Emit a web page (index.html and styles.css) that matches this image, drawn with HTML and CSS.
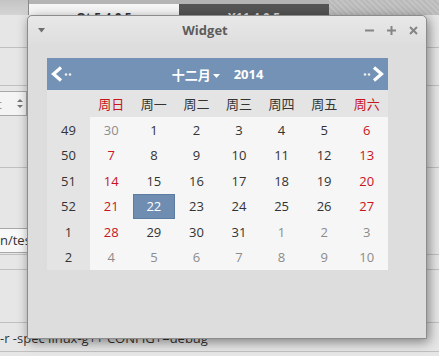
FILE: index.html
```html
<!DOCTYPE html>
<html lang="zh">
<head>
    <meta charset="UTF-8">
    <title>Widget</title>
    <link rel="stylesheet" href="styles.css">
</head>
<body>
    <!-- the application behind the dialog -->
    <div class="desktop">
        <div class="tabbar">
            <div class="tab-gap"></div>
            <div class="tab tab-light">Qt 5.4.0 5</div>
            <div class="tab tab-dark">X11 4.0.5</div>
            <div class="tab-rest"></div>
        </div>
        <div class="row row-a"></div>
        <div class="row row-b"></div>
        <div class="row row-c">
            <div class="spin">
                <span class="spin-text">t</span>
                <span class="spin-arrows"><i class="up"></i><i class="down"></i></span>
            </div>
        </div>
        <div class="row row-d">
            <div class="field">n/test</div>
        </div>
        <div class="row row-e"></div>
        <div class="row row-f"></div>
        <div class="row row-g">-r -spec linux-g++ CONFIG+=debug</div>
    </div>

    <!-- the dialog window -->
    <div class="window">
        <div class="titlebar">
            <span class="tb-menu"><svg width="7" height="5" viewBox="0 0 7 5"><path d="M0 0H7L3.5 4.5Z" fill="#6e6e6e"/></svg></span>
            <span class="tb-title">Widget</span>
            <span class="tb-btn"><svg width="9" height="9" viewBox="0 0 9 9"><path d="M0 4.5H9" stroke="#858585" stroke-width="2"/></svg></span>
            <span class="tb-btn"><svg width="9" height="9" viewBox="0 0 9 9"><path d="M0 4.5H9M4.5 0V9" stroke="#858585" stroke-width="2"/></svg></span>
            <span class="tb-btn"><svg width="9" height="9" viewBox="0 0 9 9"><path d="M1 1L8 8M8 1L1 8" stroke="#858585" stroke-width="2"/></svg></span>
        </div>

        <div class="content">
            <div class="calendar">
                <div class="cal-nav">
                    <span class="nav-btn">
                        <svg width="24" height="16" viewBox="0 0 24 16"><path d="M10 1.5 L2.5 8 L10 14.5" fill="none" stroke="#fff" stroke-width="3.2"/><circle cx="15" cy="8.5" r="1.3" fill="#eee"/><circle cx="19" cy="8.5" r="1.3" fill="#eee"/></svg>
                    </span>
                    <span class="nav-title">
                        <span class="nav-month">十二月<svg width="7" height="5" viewBox="0 0 7 5"><path d="M0 0H7L3.5 4Z" fill="#fff"/></svg></span>
                        <span class="nav-year">2014</span>
                    </span>
                    <span class="nav-btn">
                        <svg width="24" height="16" viewBox="0 0 24 16"><circle cx="5" cy="8.5" r="1.3" fill="#eee"/><circle cx="9" cy="8.5" r="1.3" fill="#eee"/><path d="M14 1.5 L21.5 8 L14 14.5" fill="none" stroke="#fff" stroke-width="3.2"/></svg>
                    </span>
                </div>

                <div class="cal-grid">
                    <div class="hd"></div>
                    <div class="hd red">周日</div>
                    <div class="hd">周一</div>
                    <div class="hd">周二</div>
                    <div class="hd">周三</div>
                    <div class="hd">周四</div>
                    <div class="hd">周五</div>
                    <div class="hd red">周六</div>

                    <div class="wk">49</div>
                    <div class="muted">30</div>
                    <div>1</div><div>2</div><div>3</div><div>4</div><div>5</div>
                    <div class="red">6</div>

                    <div class="wk">50</div>
                    <div class="red">7</div>
                    <div>8</div><div>9</div><div>10</div><div>11</div><div>12</div>
                    <div class="red">13</div>

                    <div class="wk">51</div>
                    <div class="red">14</div>
                    <div>15</div><div>16</div><div>17</div><div>18</div><div>19</div>
                    <div class="red">20</div>

                    <div class="wk">52</div>
                    <div class="red">21</div>
                    <div class="sel">22</div>
                    <div>23</div><div>24</div><div>25</div><div>26</div>
                    <div class="red">27</div>

                    <div class="wk">1</div>
                    <div class="red">28</div>
                    <div>29</div><div>30</div><div>31</div>
                    <div class="muted">1</div><div class="muted">2</div><div class="muted">3</div>

                    <div class="wk">2</div>
                    <div class="muted">4</div><div class="muted">5</div><div class="muted">6</div>
                    <div class="muted">7</div><div class="muted">8</div><div class="muted">9</div>
                    <div class="muted">10</div>
                </div>
            </div>
        </div>
    </div>
</body>
</html>
```

FILE: styles.css
```css
/* General styles */
body {
    margin: 0;
    width: 439px;
    height: 356px;
    overflow: hidden;
    position: relative;
    font-family: "Open Sans", "Noto Sans CJK SC", sans-serif;
    background-color: #e6e6e6;
    color: #333;
}

/* Background application */
.desktop {
    display: flex;
    flex-direction: column;
    height: 356px;
}

.tabbar {
    flex: none;
    height: 15px;
    display: flex;
    background-color: #b4b4b4;
}

.tab-gap {
    width: 28px;
    background: linear-gradient(#c4c4c4, #d4d4d4);
    border-right: 1px solid #8a8a8a;
}

.tab {
    width: 150px;
    height: 11px;
    margin-top: 4px;
    overflow: hidden;
    font-size: 12px;
    font-weight: bold;
    line-height: 27px;
    text-align: center;
}

.tab-light {
    background-color: #f6f6f6;
    color: #333;
}

.tab-dark {
    background-color: #555;
    color: #ddd;
}

.tab-rest {
    flex: 1;
    background: repeating-linear-gradient(45deg, #bababa 0 2px, #c4c4c4 2px 4px);
}

.row {
    flex: none;
    box-sizing: border-box;
    border-bottom: 1px solid #c0c0c0;
}

.row-a { height: 33px; }
.row-b { height: 38px; }
.row-c { height: 82px; }
.row-d { height: 87px; }
.row-e { height: 15px; }
.row-f { height: 53px; }

.row-g {
    height: 29px;
    padding-top: 5px;
    font-size: 13px;
    line-height: 20px;
    white-space: nowrap;
}

.spin {
    margin-top: 5px;
    width: 27px;
    height: 25px;
    box-sizing: border-box;
    border: 1px solid #a8a8a8;
    border-left: none;
    background-color: #f4f4f4;
    display: flex;
    align-items: center;
    justify-content: space-between;
    font-size: 13px;
}

.spin-text {
    margin-left: -3px;
    color: #888;
}

.spin-arrows {
    display: flex;
    flex-direction: column;
    gap: 3px;
    margin-right: 3px;
}

.spin-arrows i {
    width: 0;
    height: 0;
    border-left: 3px solid transparent;
    border-right: 3px solid transparent;
}

.spin-arrows .up { border-bottom: 3px solid #777; }
.spin-arrows .down { border-top: 3px solid #777; }

.field {
    margin-top: 60px;
    width: 40px;
    height: 25px;
    box-sizing: border-box;
    border: 1px solid #a8a8a8;
    border-left: none;
    background-color: #f8f8f8;
    font-size: 13px;
    line-height: 22px;
    white-space: nowrap;
    overflow: hidden;
}

/* Dialog window */
.window {
    position: absolute;
    left: 27px;
    top: 15px;
    width: 400px;
    height: 324px;
    box-sizing: border-box;
    border: 1px solid #8c8c8c;
    border-radius: 5px 5px 0 0;
    background-color: #dddddd;
    box-shadow: 2px 3px 12px rgba(0, 0, 0, 0.45);
    display: flex;
    flex-direction: column;
}

.titlebar {
    height: 28px;
    flex: none;
    display: flex;
    align-items: center;
    padding-left: 2px;
    padding-right: 2px;
    border-radius: 5px 5px 0 0;
    background: linear-gradient(#e8e8e8, #dedede);
}

.tb-menu,
.tb-btn {
    width: 22px;
    height: 28px;
    display: flex;
    align-items: center;
    justify-content: center;
}

.tb-title {
    flex: 1;
    text-align: center;
    font-size: 13px;
    font-weight: bold;
    color: #5c5c5c;
}

.content {
    padding: 14px 0 0 19px;
}

/* Calendar */
.calendar {
    width: 341px;
}

.cal-nav {
    height: 32px;
    display: flex;
    align-items: center;
    padding: 0 4px 0 4px;
    background-color: #7392b5;
    color: #fff;
}

.nav-btn {
    width: 24px;
    height: 16px;
    display: flex;
}

.nav-title {
    flex: 1;
    display: flex;
    align-items: center;
    justify-content: center;
    gap: 14px;
    font-size: 13px;
    font-weight: bold;
}

.nav-month {
    display: flex;
    align-items: center;
    gap: 2px;
}

.nav-month svg {
    margin-top: 4px;
}

.cal-grid {
    display: grid;
    grid-template-columns: 43px repeat(7, 1fr);
    grid-template-rows: 27px repeat(6, 25.5px);
    background-color: #f6f6f6;
    font-size: 13px;
    color: #333;
}

.cal-grid > div {
    display: flex;
    align-items: center;
    justify-content: center;
}

.hd,
.wk {
    background-color: #e4e4e4;
}

.red {
    color: #c8141c;
}

.muted {
    color: #8c8c8c;
}

.sel {
    box-sizing: border-box;
    border: 1px solid #5c7ca1;
    background-color: #6f8db1;
    color: #fff;
}
```
